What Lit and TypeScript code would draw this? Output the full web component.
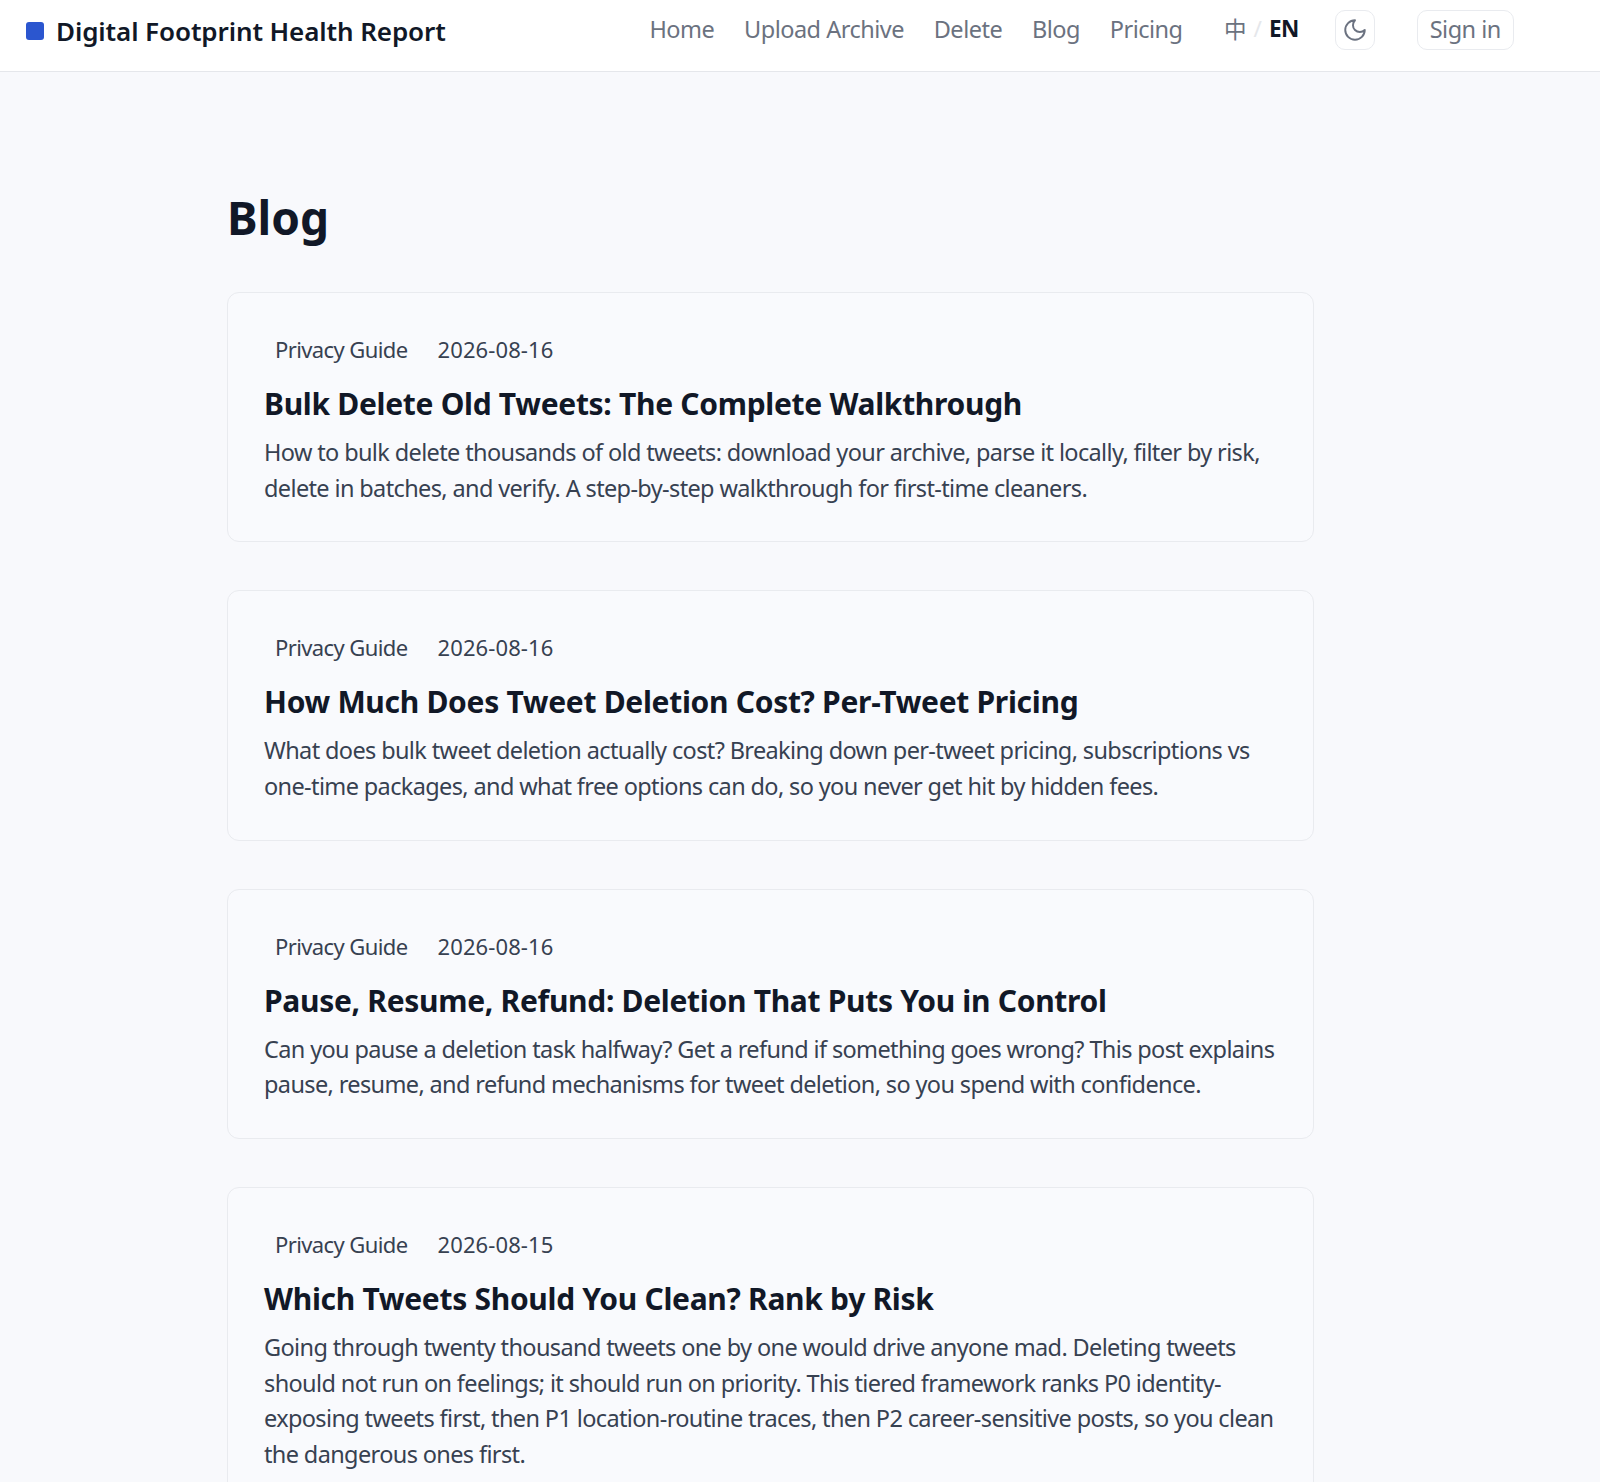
import { css, html, LitElement } from 'lit';
import { customElement } from 'lit/decorators.js';

interface Post {
  tag: string;
  date: string;
  title: string;
  excerpt: string[];
}

const POSTS: Post[] = [
  {
    tag: 'Privacy Guide',
    date: '2026-08-16',
    title: 'Bulk Delete Old Tweets: The Complete Walkthrough',
    excerpt: [
      'How to bulk delete thousands of old tweets: download your archive, parse it locally, filter by risk,',
      'delete in batches, and verify. A step-by-step walkthrough for first-time cleaners.',
    ],
  },
  {
    tag: 'Privacy Guide',
    date: '2026-08-16',
    title: 'How Much Does Tweet Deletion Cost? Per-Tweet Pricing',
    excerpt: [
      'What does bulk tweet deletion actually cost? Breaking down per-tweet pricing, subscriptions vs',
      'one-time packages, and what free options can do, so you never get hit by hidden fees.',
    ],
  },
  {
    tag: 'Privacy Guide',
    date: '2026-08-16',
    title: 'Pause, Resume, Refund: Deletion That Puts You in Control',
    excerpt: [
      'Can you pause a deletion task halfway? Get a refund if something goes wrong? This post explains',
      'pause, resume, and refund mechanisms for tweet deletion, so you spend with confidence.',
    ],
  },
  {
    tag: 'Privacy Guide',
    date: '2026-08-15',
    title: 'Which Tweets Should You Clean? Rank by Risk',
    excerpt: [
      'Going through twenty thousand tweets one by one would drive anyone mad. Deleting tweets',
      'should not run on feelings; it should run on priority. This tiered framework ranks P0 identity-',
      'exposing tweets first, then P1 location-routine traces, then P2 career-sensitive posts, so you clean',
      'the dangerous ones first.',
    ],
  },
];

const NAV = ['Home', 'Upload Archive', 'Delete', 'Blog', 'Pricing'];

@customElement('app-root')
export class AppRoot extends LitElement {
  static styles = css`
    :host {
      display: block;
      height: 100vh;
      overflow: hidden;
      background: #f8f9fc;
      color: #111827;
      font-family: 'Noto Sans', 'Noto Sans CJK SC', sans-serif;
    }

    a {
      color: inherit;
      text-decoration: none;
    }

    header {
      height: 72px;
      box-sizing: border-box;
      padding: 0 86px 11px 26px;
      display: flex;
      align-items: center;
      background: #ffffff;
      border-bottom: 1px solid #e5e7eb;
    }

    .brand {
      display: flex;
      align-items: center;
      gap: 12px;
      margin-top: 1px;
      font-size: 26px;
      font-weight: 600;
      letter-spacing: -0.1px;
      color: #111827;
    }

    .mark {
      width: 18px;
      height: 18px;
      border-radius: 3px;
      background: #2b56cf;
    }

    .nav {
      margin-left: auto;
      margin-top: -2px;
      display: flex;
      align-items: center;
      gap: 29.75px;
      font-size: 23.5px;
      letter-spacing: -0.5px;
      color: #6b7280;
    }

    .lang {
      margin-left: 41.5px;
      margin-top: -3px;
      display: flex;
      align-items: center;
      gap: 7px;
      font-size: 22.5px;
      color: #6b7280;
    }

    .lang .sep {
      color: #e5e7eb;
    }

    .lang .active {
      font-weight: 700;
      color: #111827;
      letter-spacing: -0.4px;
    }

    .icon-btn,
    .sign-in {
      height: 40px;
      box-sizing: border-box;
      display: flex;
      align-items: center;
      justify-content: center;
      border: 1px solid #e9ebef;
      border-radius: 10px;
      background: #ffffff;
      color: #6b7280;
      font: inherit;
    }

    .icon-btn {
      width: 40px;
      margin-left: 35.5px;
      padding: 0;
    }

    .sign-in {
      width: 97.5px;
      margin-left: 42px;
      padding: 0 0 2px;
      font-size: 23.5px;
      letter-spacing: -0.5px;
    }

    main {
      width: 1087px;
      margin-left: 227px;
      padding-top: 109px;
    }

    h1 {
      margin: 0 0 38px;
      font-size: 46px;
      line-height: 73px;
      font-weight: 700;
      color: #111827;
    }

    .posts {
      display: flex;
      flex-direction: column;
      gap: 48px;
    }

    .card {
      box-sizing: border-box;
      padding: 38px 36px 35.4px;
      border: 1px solid #e9ebef;
      border-radius: 12px;
      background: #f9fafd;
    }

    .meta {
      display: flex;
      align-items: center;
      gap: 30px;
      padding-left: 11px;
      font-size: 22px;
      line-height: 36px;
      letter-spacing: -0.6px;
      color: #374151;
    }

    .date {
      letter-spacing: 0.1px;
    }

    h2 {
      margin: 14px 0 0;
      font-size: 30px;
      line-height: 45px;
      font-weight: 700;
      letter-spacing: -0.3px;
      color: #111827;
    }

    p {
      margin: 9px 0 0;
      font-size: 23.5px;
      line-height: 35.5px;
      letter-spacing: -0.63px;
      color: #374151;
      white-space: nowrap;
    }
  `;

  render() {
    return html`
      <header>
        <a class="brand" href="#"><span class="mark"></span>Digital Footprint Health Report</a>
        <nav class="nav">${NAV.map((item) => html`<a href="#">${item}</a>`)}</nav>
        <div class="lang"><span>中</span><span class="sep">/</span><span class="active">EN</span></div>
        <button class="icon-btn" type="button" aria-label="Toggle theme">
          <svg width="26" height="26" viewBox="0 0 24 24" fill="none" stroke="currentColor" stroke-width="1.8" stroke-linecap="round" stroke-linejoin="round">
            <path d="M12 3a6 6 0 0 0 9 9 9 9 0 1 1-9-9Z"></path>
          </svg>
        </button>
        <button class="sign-in" type="button">Sign in</button>
      </header>
      <main>
        <h1>Blog</h1>
        <div class="posts">
          ${POSTS.map(
            (post) => html`
              <article class="card">
                <div class="meta"><span>${post.tag}</span><span class="date">${post.date}</span></div>
                <h2>${post.title}</h2>
                <p>${post.excerpt.map((line, i) => html`${i > 0 ? html`<br />` : ''}${line}`)}</p>
              </article>
            `
          )}
        </div>
      </main>
    `;
  }
}
